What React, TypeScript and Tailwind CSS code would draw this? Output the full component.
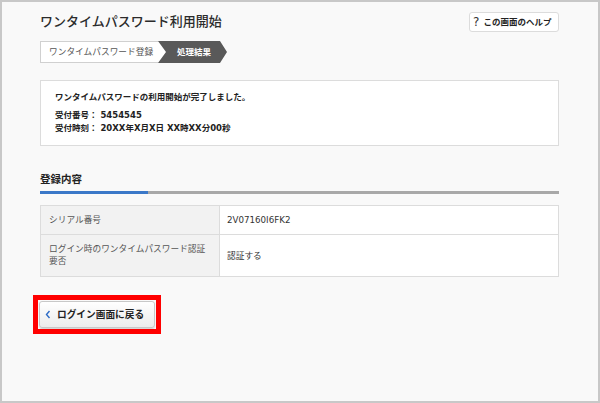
import React from "react";

export default function App() {
  return (
    <div className="w-[600px] h-[403px] border-2 border-[#c8c8c8] bg-[#f9f9f9] font-['DejaVu_Sans','Noto_Sans_CJK_JP',sans-serif] text-[#333] pl-[38px] pr-[39px] pt-[10px]">
      {/* header */}
      <div className="flex items-center justify-between h-[20px]">
        <h1 className="text-[13px] leading-[20px] font-medium text-[#2b2b2b]">
          ワンタイムパスワード利用開始
        </h1>
        <button className="h-[20px] w-[90px] bg-white border border-[#dcdcdc] rounded-[3px] flex items-center pl-[3px] gap-[4px]">
          <span className="text-[12px] leading-none font-normal text-[#333]">?</span>
          <span className="text-[8.5px] leading-none font-bold text-[#222]">この画面のヘルプ</span>
        </button>
      </div>

      {/* steps */}
      <div className="flex h-[22px] mt-[9px]">
        <div className="w-[126px] h-full bg-white border-y border-l border-[#d0d0d0] [clip-path:polygon(0_0,118px_0,126px_50%,118px_100%,0_100%)] flex items-center pl-[8px]">
          <span className="text-[8.7px] leading-none text-[#555]">ワンタイムパスワード登録</span>
        </div>
        <div className="-ml-[8px] w-[69px] h-full bg-[#595959] [clip-path:polygon(0_0,62px_0,69px_50%,62px_100%,0_100%,8px_50%)] flex items-center pl-[19px]">
          <span className="text-[8.5px] leading-none font-bold text-white">処理結果</span>
        </div>
      </div>

      {/* message box */}
      <div className="mt-[17px] bg-white border border-[#dcdcdc] pl-[14px] pt-[10px] pb-[10px]">
        <p className="text-[8.5px] leading-[13px] font-bold text-[#222]">
          ワンタイムパスワードの利用開始が完了しました。
        </p>
        <p className="mt-[5px] text-[8.5px] leading-[13px] font-bold text-[#222]">受付番号： 5454545</p>
        <p className="text-[8.5px] leading-[13px] font-bold text-[#222]">
          受付時刻： 20XX年X月X日 XX時XX分00秒
        </p>
      </div>

      {/* section heading */}
      <h2 className="mt-[26px] text-[10.5px] leading-[14px] font-bold text-[#222]">登録内容</h2>
      <div className="mt-[5px] flex h-[3px]">
        <div className="w-[108px] bg-[#3b78c8]" />
        <div className="flex-1 bg-[#a8a8a8]" />
      </div>

      {/* table */}
      <table className="mt-[11px] w-full border-collapse border border-[#dcdcdc] text-[8.7px]">
        <tbody>
          <tr className="h-[29px]">
            <th className="w-[179px] bg-[#f2f2f2] border border-[#dcdcdc] text-left font-normal text-[#555] pl-[8px] leading-[12px]">
              シリアル番号
            </th>
            <td className="bg-white border border-[#dcdcdc] pl-[7px] text-[#333] leading-[12px]">2V07160I6FK2</td>
          </tr>
          <tr className="h-[42px]">
            <th className="w-[179px] bg-[#f2f2f2] border border-[#dcdcdc] text-left font-normal text-[#555] pl-[8px] pr-[6px] leading-[11.5px]">
              ログイン時のワンタイムパスワード認証
              <br />
              要否
            </th>
            <td className="bg-white border border-[#dcdcdc] pl-[7px] text-[#333] leading-[12px]">認証する</td>
          </tr>
        </tbody>
      </table>

      {/* back button with red highlight */}
      <div className="mt-[18px] -ml-[7px] inline-flex border-[5px] border-[#ff0000] p-px">
        <button className="h-[27px] w-[116px] rounded-[3px] border border-[#c8c8c8] bg-gradient-to-b from-white to-[#ececec] shadow-[0_1px_1px_rgba(0,0,0,0.15)] flex items-center pl-[5px] gap-[6px]">
          <svg width="6" height="9" viewBox="0 0 6 9" className="shrink-0">
            <polyline points="4.5,1 1.5,4.5 4.5,8" fill="none" stroke="#2e6bc6" strokeWidth="1.4" />
          </svg>
          <span className="text-[9.7px] leading-none font-bold text-[#222]">ログイン画面に戻る</span>
        </button>
      </div>
    </div>
  );
}
